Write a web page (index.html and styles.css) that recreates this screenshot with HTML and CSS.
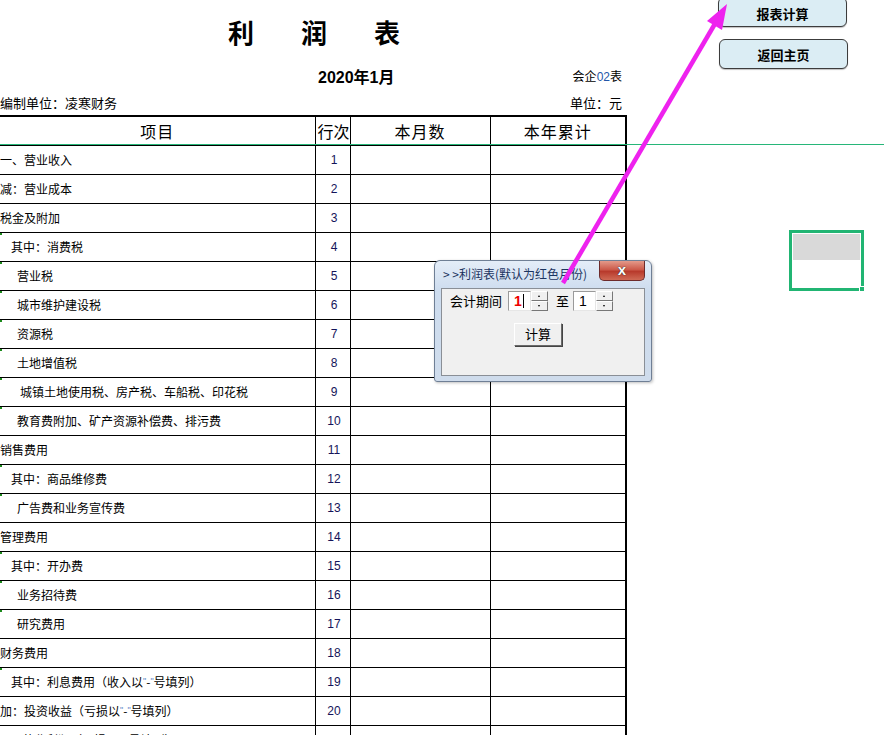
FILE: index.html
```html
<!DOCTYPE html>
<html lang="zh-CN">
<head>
    <meta charset="UTF-8">
    <meta name="viewport" content="width=device-width, initial-scale=1.0">
    <title>利润表</title>
    <link rel="stylesheet" href="styles.css">
</head>
<body>
<div class="sheet">
    <!-- report -->
    <div class="report">
        <h1 class="title"><span>利</span><span>润</span><span>表</span></h1>
        <div class="meta-row date-row">
            <span></span>
            <span class="date">2020年1月</span>
            <span class="code">会企<em>02</em>表</span>
        </div>
        <div class="meta-row unit-row">
            <span>编制单位：凌寒财务</span>
            <span>单位：元</span>
        </div>
        <table class="income">
            <colgroup>
                <col class="c-item">
                <col class="c-no">
                <col class="c-month">
                <col class="c-year">
            </colgroup>
            <thead>
                <tr>
                    <th>项目</th>
                    <th class="no-head">行次</th>
                    <th>本月数</th>
                    <th>本年累计</th>
                </tr>
            </thead>
            <tbody>
                <tr><td>一、营业收入</td><td class="no">1</td><td></td><td></td></tr>
                <tr><td>减：营业成本</td><td class="no">2</td><td></td><td></td></tr>
                <tr><td>税金及附加</td><td class="no">3</td><td></td><td></td></tr>
                <tr><td class="i1 mark">其中：消费税</td><td class="no">4</td><td></td><td></td></tr>
                <tr><td class="i2 mark">营业税</td><td class="no">5</td><td></td><td></td></tr>
                <tr><td class="i2 mark">城市维护建设税</td><td class="no">6</td><td></td><td></td></tr>
                <tr><td class="i2 mark">资源税</td><td class="no">7</td><td></td><td></td></tr>
                <tr><td class="i2 mark">土地增值税</td><td class="no">8</td><td></td><td></td></tr>
                <tr><td class="i3 mark">城镇土地使用税、房产税、车船税、印花税</td><td class="no">9</td><td></td><td></td></tr>
                <tr><td class="i2 mark">教育费附加、矿产资源补偿费、排污费</td><td class="no">10</td><td></td><td></td></tr>
                <tr><td>销售费用</td><td class="no">11</td><td></td><td></td></tr>
                <tr><td class="i1 mark">其中：商品维修费</td><td class="no">12</td><td></td><td></td></tr>
                <tr><td class="i2 mark">广告费和业务宣传费</td><td class="no">13</td><td></td><td></td></tr>
                <tr><td>管理费用</td><td class="no">14</td><td></td><td></td></tr>
                <tr><td class="i1 mark">其中：开办费</td><td class="no">15</td><td></td><td></td></tr>
                <tr><td class="i2 mark">业务招待费</td><td class="no">16</td><td></td><td></td></tr>
                <tr><td class="i2 mark">研究费用</td><td class="no">17</td><td></td><td></td></tr>
                <tr><td>财务费用</td><td class="no">18</td><td></td><td></td></tr>
                <tr><td class="i1 mark">其中：利息费用（收入以<i>"</i>-<i>"</i>号填列）</td><td class="no">19</td><td></td><td></td></tr>
                <tr><td>加：投资收益（亏损以<i>"</i>-<i>"</i>号填列）</td><td class="no">20</td><td></td><td></td></tr>
                <tr><td class="i4">营业利润（亏损以<i>"</i>-<i>"</i>号填列）</td><td class="no">21</td><td></td><td></td></tr>
            </tbody>
        </table>
    </div>

    <!-- freeze pane line + selected cell -->
    <div class="freeze-line"></div>
    <div class="selection">
        <div class="sel-top"></div>
        <span class="sel-handle"></span>
    </div>

    <!-- shape buttons -->
    <button class="shape-btn btn-calc">报表计算</button>
    <button class="shape-btn btn-home">返回主页</button>

    <!-- userform -->
    <div class="dialog">
        <div class="dialog-title">
            <span>&gt; &gt;利润表(默认为红色月份)</span>
            <span class="close-btn">x</span>
        </div>
        <div class="dialog-body">
            <div class="period-row">
                <span class="label">会计期间</span>
                <span class="spin-input"><span class="num red">1</span><span class="caret"></span></span>
                <span class="spin"><span class="up"></span><span class="down"></span></span>
                <span class="label to">至</span>
                <span class="spin-input"><span class="num">1</span></span>
                <span class="spin"><span class="up"></span><span class="down"></span></span>
            </div>
            <div class="action-row">
                <span class="calc-btn">计算</span>
            </div>
        </div>
    </div>

    <!-- arrow -->
    <svg class="arrow" width="884" height="735" viewBox="0 0 884 735">
        <line x1="563" y1="283" x2="716" y2="22" stroke="#ee22ee" stroke-width="4.5"/>
        <polygon points="727,4 722,30 707,21" fill="#ee22ee"/>
    </svg>
</div>
</body>
</html>
```

FILE: styles.css
```css
/*global*/
* {
    margin: 0;
    padding: 0;
    box-sizing: border-box;
}

body {
    font-family: "Noto Sans CJK SC", "Liberation Sans", sans-serif;
    color: #000;
    background-color: #fff;
    overflow: hidden;
}

.sheet {
    position: relative;
    width: 884px;
    height: 735px;
    overflow: hidden;
}

/*report header*/
.report {
    width: 626px;
}

.title {
    display: flex;
    justify-content: center;
    gap: 47px;
    height: 60px;
    padding-top: 6px;
    padding-left: 2px;
    font-size: 26px;
    line-height: 52px;
    font-weight: bold;
}

.meta-row {
    display: flex;
    align-items: center;
    justify-content: space-between;
    padding-right: 4px;
}

.date-row {
    display: grid;
    grid-template-columns: 318px 1fr auto;
    height: 29px;
    padding-top: 2px;
}

.date {
    font-family: "Liberation Sans", "Noto Sans CJK SC", sans-serif;
    font-size: 16px;
    font-weight: bold;
}

.code {
    font-size: 12px;
}

.code em {
    font-style: normal;
    font-family: "Liberation Sans", sans-serif;
    color: #2356a8;
}

.unit-row {
    height: 26px;
    font-size: 13px;
}

/*table*/
.income {
    width: 626px;
    border-collapse: collapse;
    table-layout: fixed;
}

.c-item { width: 315px; }
.c-no { width: 35px; }
.c-month { width: 140px; }
.c-year { width: 136px; }

.income th,
.income td {
    height: 29px;
    border: 1px solid #000;
    line-height: 1;
    white-space: nowrap;
    overflow: hidden;
}

.income tr > :first-child {
    border-left: none;
}

.income tr > :last-child {
    border-right: 2px solid #000;
}

.income thead th {
    border-top: 2px solid #000;
    font-size: 16px;
    font-weight: normal;
    letter-spacing: 1px;
    padding-top: 1px;
}

.income .no-head {
    letter-spacing: 0;
    text-indent: 2px;
}

.income td {
    font-size: 12px;
    padding-left: 0;
}

.income td.no {
    font-family: "Liberation Sans", sans-serif;
    text-align: center;
    color: #14145a;
    padding-left: 3px;
}

.income td i {
    font-style: normal;
    font-family: "Liberation Sans", sans-serif;
    font-size: 9px;
    vertical-align: 3px;
    color: #5a86c8;
}

.income td.i1 { padding-left: 11px; }
.income td.i2 { padding-left: 17px; }
.income td.i3 { padding-left: 20px; }
.income td.i4 { padding-left: 22px; }

.income td.mark {
    position: relative;
}

.income td.mark::before {
    content: "";
    position: absolute;
    left: 0;
    top: 0;
    width: 2px;
    height: 2px;
    background-color: #1c8a1c;
}

/*freeze + selection*/
.freeze-line {
    position: absolute;
    left: 0;
    right: 0;
    top: 144px;
    height: 1px;
    background-color: #27b679;
}

.selection {
    position: absolute;
    left: 789px;
    top: 230px;
    width: 75px;
    height: 61px;
    border: 3px solid #21b573;
    padding: 1px;
}

.sel-top {
    height: 26px;
    background-color: #d9d9d9;
}

.sel-handle {
    position: absolute;
    right: -4px;
    bottom: -4px;
    width: 6px;
    height: 6px;
    background-color: #21b573;
    border: 1px solid #fff;
}

/*shape buttons*/
.shape-btn {
    position: absolute;
    width: 129px;
    height: 30px;
    border: 1.5px solid #3c3c3c;
    border-radius: 6px;
    background-color: #dbedf4;
    font-family: "Noto Sans CJK SC", sans-serif;
    font-size: 13px;
    font-weight: bold;
    color: #000;
    box-shadow: 0 1px 1px rgba(0, 0, 0, 0.25);
}

.btn-calc {
    left: 718px;
    top: -3px;
    padding-top: 2px;
}

.btn-home {
    left: 719px;
    top: 39px;
}

/*dialog*/
.dialog {
    position: absolute;
    left: 434px;
    top: 260px;
    width: 218px;
    height: 122px;
    border: 1px solid #6f7f95;
    border-radius: 6px 6px 3px 3px;
    background: linear-gradient(#e4edf8, #cddcee 30px, #cfdcec);
    box-shadow: 1px 1px 3px rgba(0, 0, 0, 0.25);
    padding: 0 6px 6px 6px;
}

.dialog-title {
    display: flex;
    justify-content: space-between;
    height: 27px;
    font-size: 12px;
    color: #1b3460;
}

.dialog-title > span:first-child {
    padding-top: 4px;
    padding-left: 2px;
}

.close-btn {
    width: 46px;
    height: 20px;
    border: 1px solid #6d2b2b;
    border-top: none;
    border-radius: 0 0 5px 5px;
    background: linear-gradient(#e49a8a, #cc5a4a 45%, #b83a2c 55%, #cf6a55);
    color: #fff;
    font-family: "Liberation Sans", sans-serif;
    font-size: 15px;
    font-weight: bold;
    line-height: 17px;
    text-align: center;
    text-shadow: 0 0 1px #333, 0 0 1px #333;
}

.dialog-body {
    height: 88px;
    border: 1px solid #8a8f96;
    background-color: #f0f0f0;
    padding: 1px 0 0 8px;
    font-size: 13px;
}

.period-row {
    display: flex;
    align-items: center;
    height: 21px;
}

.label {
    margin-right: 6px;
}

.label.to {
    margin-left: 8px;
    margin-right: 4px;
}

.spin-input {
    display: flex;
    align-items: center;
    width: 23px;
    height: 20px;
    background-color: #fff;
    border: 1px solid;
    border-color: #9a9a9a #e6e6e6 #e6e6e6 #9a9a9a;
    padding-left: 5px;
}

.num {
    font-family: "Liberation Sans", sans-serif;
    font-size: 14px;
}

.num.red {
    color: #ee0000;
    font-weight: bold;
}

.caret {
    width: 1px;
    height: 14px;
    margin-left: 1px;
    background-color: #000;
}

.spin {
    display: flex;
    flex-direction: column;
    width: 17px;
    height: 20px;
}

.spin .up,
.spin .down {
    position: relative;
    flex: 1;
    background-color: #f0f0f0;
    border: 1px solid;
    border-color: #fff #777 #777 #fff;
}

.spin .up::after,
.spin .down::after {
    content: "";
    position: absolute;
    left: 6px;
    top: 3px;
    border-left: 1.5px solid transparent;
    border-right: 1.5px solid transparent;
}

.spin .up::after {
    border-bottom: 2px solid #000;
}

.spin .down::after {
    border-top: 2px solid #000;
}

.action-row {
    display: flex;
    justify-content: center;
    padding-top: 12px;
    padding-right: 18px;
}

.calc-btn {
    width: 48px;
    height: 23px;
    border: 1px solid;
    border-color: #fff #6a6a6a #6a6a6a #fff;
    box-shadow: 1px 1px 0 #444;
    background-color: #f0f0f0;
    text-align: center;
    line-height: 20px;
}

/*arrow*/
.arrow {
    position: absolute;
    left: 0;
    top: 0;
    pointer-events: none;
}
```
